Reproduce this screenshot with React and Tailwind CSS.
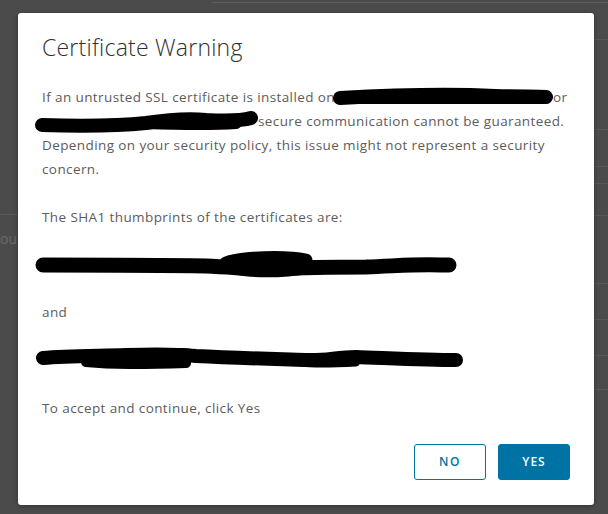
import React from "react";

function Scribble({ width, height = 24, paths, className = "" }) {
  return (
    <svg
      width={width}
      height={height}
      viewBox={`0 0 ${width} ${height}`}
      className={`overflow-visible shrink-0 ${className}`}
      aria-hidden="true"
    >
      {paths.map((p, i) => (
        <path
          key={i}
          d={p.d}
          fill="none"
          stroke="#000"
          strokeWidth={p.w}
          strokeLinecap="round"
          strokeLinejoin="round"
        />
      ))}
    </svg>
  );
}

function Backdrop() {
  const rightRows = [40, 90, 37, 17, 32, 68, 36, 36, 34];
  return (
    <div className="col-start-1 row-start-1 flex flex-col">
      <div className="h-[2px]" />
      <div className="ml-[212px] h-px bg-[#5c5c5c]" />
      <div className="flex flex-1 mt-[-3px]">
        <div className="w-[18px] flex flex-col">
          <div className="h-[215px] border-b border-[#575757]" />
          <div className="pt-[14px] text-[14px] leading-[20px] text-[#6a6a6a] whitespace-nowrap">
            ould
          </div>
        </div>
        <div className="ml-auto w-[14px] flex flex-col">
          {rightRows.map((h, i) => (
            <div key={i} className="border-b border-[#575757]" style={{ height: h }} />
          ))}
        </div>
      </div>
    </div>
  );
}

export default function App() {
  return (
    <div
      className="grid w-[608px] h-[514px] overflow-hidden bg-[#4b4b4b]"
      style={{ fontFamily: '"Open Sans", "Liberation Sans", sans-serif' }}
    >
      <Backdrop />

      <div className="col-start-1 row-start-1 pt-[13px] pl-[18px]">
        <div className="w-[576px] h-[492px] bg-white rounded-[3px] shadow-[0_1px_4px_rgba(0,0,0,0.35)] pt-[16px] px-[24px] text-[#5c5c5c]">
          <h3 className="text-[23px] leading-[36px] font-light text-[#2f2f2f] tracking-[0.01em]">
            Certificate Warning
          </h3>

          <div className="mt-[20px] text-[13.5px] leading-[24px] tracking-[0.4px]">
            <div className="flex items-center whitespace-nowrap">
              <span>If an untrusted SSL certificate is installed on</span>
              <Scribble
                width={216}
                paths={[
                  { d: "M5 13 C60 10 120 9 160 11 C188 12 202 11 211 12", w: 14 },
                  { d: "M7 15 C70 15 150 15 209 15", w: 8 },
                ]}
              />
              <span className="ml-[2px]">or</span>
            </div>
            <div className="flex items-center whitespace-nowrap">
              <Scribble
                width={221}
                className="ml-[-6px]"
                paths={[
                  { d: "M6 16 C40 17 80 17 110 14 C130 11 150 9 170 11 C190 12 205 12 215 9", w: 14 },
                  { d: "M110 14 C140 15 170 16 200 14", w: 12 },
                ]}
              />
              <span className="ml-[1px]">secure communication cannot be guaranteed.</span>
            </div>
            <div className="whitespace-nowrap">
              Depending on your security policy, this issue might not represent a security
            </div>
            <div>concern.</div>
          </div>

          <p className="mt-[24px] text-[13.5px] leading-[24px] tracking-[0.4px]">
            The SHA1 thumbprints of the certificates are:
          </p>

          <div className="mt-[24px] h-[24px] ml-[-6px]">
            <Scribble
              width={420}
              paths={[
                { d: "M7 12 C60 12 120 12 170 13 C200 14 215 17 240 16 C275 14 300 14 330 14 C360 13 380 11 405 12 L413 12", w: 15 },
                { d: "M190 10 C205 4 250 3 270 7 C262 12 240 16 205 15", w: 13 },
                { d: "M200 17 C225 22 250 20 275 16", w: 9 },
              ]}
            />
          </div>

          <p className="mt-[23px] text-[13.5px] leading-[24px] tracking-[0.4px]">and</p>

          <div className="mt-[23px] h-[24px] ml-[-6px]">
            <Scribble
              width={427}
              paths={[
                { d: "M7 11 C30 9 60 9 90 8 C120 7 140 7 160 9 C200 11 240 12 270 13 C290 14 300 10 320 10 C350 11 390 13 420 13", w: 14 },
                { d: "M50 15 C80 18 110 17 150 16", w: 10 },
                { d: "M120 7 C140 3 155 4 165 8", w: 7 },
                { d: "M265 16 C280 18 300 17 320 16", w: 7 },
              ]}
            />
          </div>

          <p className="mt-[25px] text-[13.5px] leading-[24px] tracking-[0.4px]">
            To accept and continue, click Yes
          </p>

          <div className="mt-[24px] flex justify-end gap-[12px]">
            <button className="w-[72px] h-[36px] rounded-[3px] border border-[#0072a3] bg-white text-[#0072a3] text-[12px] font-semibold tracking-[0.14em]">
              NO
            </button>
            <button className="w-[72px] h-[36px] rounded-[3px] border border-[#0072a3] bg-[#0072a3] text-white text-[12px] font-semibold tracking-[0.08em]">
              YES
            </button>
          </div>
        </div>
      </div>
    </div>
  );
}
